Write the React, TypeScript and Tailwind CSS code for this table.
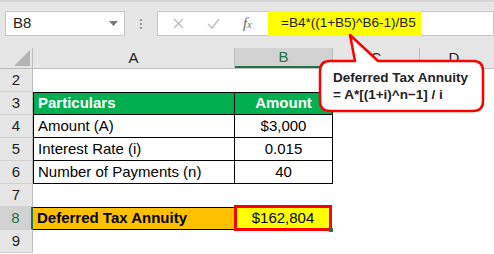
import React from "react";

const font = "font-['Liberation_Sans',Arial,sans-serif]";

function RowHead({ n, selected }: { n: number; selected?: boolean }) {
  return (
    <div
      className={`w-[33px] h-full flex items-center justify-center border-b border-[#d0d0d0] text-[15px] ${
        selected
          ? "bg-[#d2d2d2] text-[#217346] border-r-2 border-r-[#217346]"
          : "bg-[#e6e6e6] text-[#222] border-r border-r-[#bdbdbd]"
      }`}
    >
      {n}
    </div>
  );
}

export default function App() {
  return (
    <div className={`relative w-[494px] h-[254px] overflow-hidden bg-white ${font}`}>
      {/* formula bar */}
      <div className="h-[48px] bg-[#e6e6e6] border-t-2 border-[#d6d6d6] flex items-start pt-[9px] pl-[5px]">
        <div className="w-[120px] h-[25px] bg-white border border-[#c6c6c6] flex items-center justify-between pl-[7px] pr-[6px]">
          <span className="text-[15px] text-[#222]">B8</span>
          <svg width="9" height="6" viewBox="0 0 9 6">
            <path d="M0 0 L9 0 L4.5 5 Z" fill="#777" />
          </svg>
        </div>
        <div className="w-[32px] h-[25px] flex flex-col items-center justify-center gap-[2px]">
          <span className="w-[2px] h-[2px] bg-[#9a9a9a]" />
          <span className="w-[2px] h-[2px] bg-[#9a9a9a]" />
          <span className="w-[2px] h-[2px] bg-[#9a9a9a]" />
        </div>
        <div className="flex-1 h-[25px] bg-white border border-[#c6c6c6] flex items-center">
          <div className="w-[110px] flex items-center pl-[15px] gap-[23px]">
            <svg width="11" height="11" viewBox="0 0 11 11">
              <path d="M1 1 L10 10 M10 1 L1 10" stroke="#bdbdbd" strokeWidth="1.4" />
            </svg>
            <svg width="13" height="11" viewBox="0 0 13 11">
              <path d="M1 6 L5 10 L12 1" stroke="#bdbdbd" strokeWidth="1.4" fill="none" />
            </svg>
            <span className="font-['Liberation_Serif',serif] italic text-[15px] text-[#666] leading-none">
              f<span className="text-[10px]">x</span>
            </span>
          </div>
          <div className="w-[153px] h-[25px] bg-[#ffff00] flex items-center pl-[13px] text-[13.5px] text-[#222] whitespace-nowrap">
            =B4*((1+B5)^B6-1)/B5
          </div>
        </div>
      </div>

      {/* column headers */}
      <div className="h-[21px] flex bg-[#e6e6e6] text-[15px] text-[#222] border-b border-[#bdbdbd]">
        <div className="w-[33px] border-r border-[#bdbdbd] flex items-end justify-end pr-[2px] pb-[2px]">
          <svg width="16" height="16" viewBox="0 0 16 16">
            <path d="M16 0 L16 16 L0 16 Z" fill="#b4b4b4" />
          </svg>
        </div>
        <div className="w-[202px] border-r border-[#bdbdbd] flex items-center justify-center">A</div>
        <div className="w-[98px] bg-[#d2d2d2] border-b-2 border-[#217346] border-r border-r-[#bdbdbd] flex items-center justify-center text-[#217346]">
          B
        </div>
        <div className="w-[87px] border-r border-[#bdbdbd] flex items-center justify-center">C</div>
        <div className="flex-1 flex items-center justify-center pr-[6px]">D</div>
      </div>

      {/* rows */}
      <div className="text-[15px] text-black">
        <div className="h-[23px] flex">
          <RowHead n={2} />
        </div>
        <div className="h-[23px] flex">
          <RowHead n={3} />
          <div className="w-[202px] bg-[#00b050] border border-black text-white font-bold flex items-center pl-[4px]">
            Particulars
          </div>
          <div className="w-[98px] bg-[#00b050] border-y border-r border-black text-white font-bold flex items-center justify-center">
            Amount
          </div>
        </div>
        {[
          ["Amount (A)", "$3,000", 4],
          ["Interest Rate (i)", "0.015", 5],
          ["Number of Payments (n)", "40", 6],
        ].map(([label, value, n]) => (
          <div key={n as number} className="h-[23px] flex">
            <RowHead n={n as number} />
            <div className="w-[202px] border-x border-b border-black flex items-center pl-[4px]">{label}</div>
            <div className="w-[98px] border-r border-b border-black flex items-center justify-center">{value}</div>
          </div>
        ))}
        <div className="h-[23px] flex">
          <RowHead n={7} />
        </div>
        <div className="h-[23px] flex">
          <RowHead n={8} selected />
          <div className="w-[201px] bg-[#ffc000] border-y border-black font-bold flex items-center pl-[4px]">
            Deferred Tax Annuity
          </div>
          <div className="relative w-[98px] bg-[#ffff00] border-[3px] border-[#ff0000] -mt-[2px] h-[26px] flex items-center justify-center">
            $162,804
            <span className="absolute -right-[4px] -bottom-[4px] w-[4px] h-[4px] bg-[#217346]" />
          </div>
        </div>
        <div className="h-[23px] flex">
          <RowHead n={9} />
        </div>
      </div>

      {/* callout */}
      <svg className="absolute left-[300px] top-[30px]" width="194" height="90" viewBox="0 0 194 90">
        <path
          d="M30 31 L55 31 L50 5 L78 31 L173 31 Q183 31 183 41 L183 71 Q183 81 173 81 L30 81 Q20 81 20 71 L20 41 Q20 31 30 31 Z"
          fill="white"
          stroke="#ff0000"
          strokeWidth="2.5"
          strokeLinejoin="round"
        />
      </svg>
      <div className="absolute left-[333px] top-[69px] text-[13.5px] font-bold leading-[17px] text-[#222]">
        <div>Deferred Tax Annuity</div>
        <div>= A*[(1+i)^n−1] / i</div>
      </div>
    </div>
  );
}
